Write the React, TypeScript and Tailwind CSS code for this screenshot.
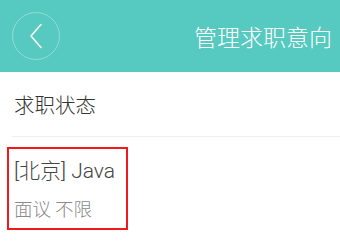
export default function App() {
  const font = { fontFamily: '"Noto Sans CJK SC", "Noto Sans", sans-serif' };
  return (
    <div className="w-[340px] h-[245px] bg-white overflow-hidden" style={font}>
      <div className="h-[72px] bg-[#56c9c0] flex items-center justify-between pl-[12px] pr-[8px]">
        <div className="w-[48px] h-[48px] rounded-full border border-white/35 flex items-center justify-center">
          <svg width="14" height="26" viewBox="0 0 14 26" fill="none">
            <path d="M12 1.5 L2 13 L12 24.5" stroke="white" strokeWidth="1.6" strokeLinecap="round" strokeLinejoin="round" />
          </svg>
        </div>
        <div className="text-white text-[23px] font-light leading-none">管理求职意向</div>
      </div>
      <div className="h-[65px] ml-[12px] border-b border-[#efefef] flex items-center pl-[2px]">
        <span className="text-[20.5px] text-[#333] font-light">求职状态</span>
      </div>
      <div className="mt-[10px] ml-[7px] w-[121px] h-[83px] border-2 border-[#f01a1a] pl-[5px] pt-[9px]">
        <div className="text-[21px] text-[#444] font-light leading-[27px] whitespace-nowrap" style={{ fontFamily: '"Roboto", "Noto Sans CJK SC", sans-serif' }}>
          [北京] Java
        </div>
        <div className="mt-[12px] text-[18.5px] text-[#8a8a8a] font-light leading-[22px] whitespace-nowrap">面议 不限</div>
      </div>
    </div>
  );
}
